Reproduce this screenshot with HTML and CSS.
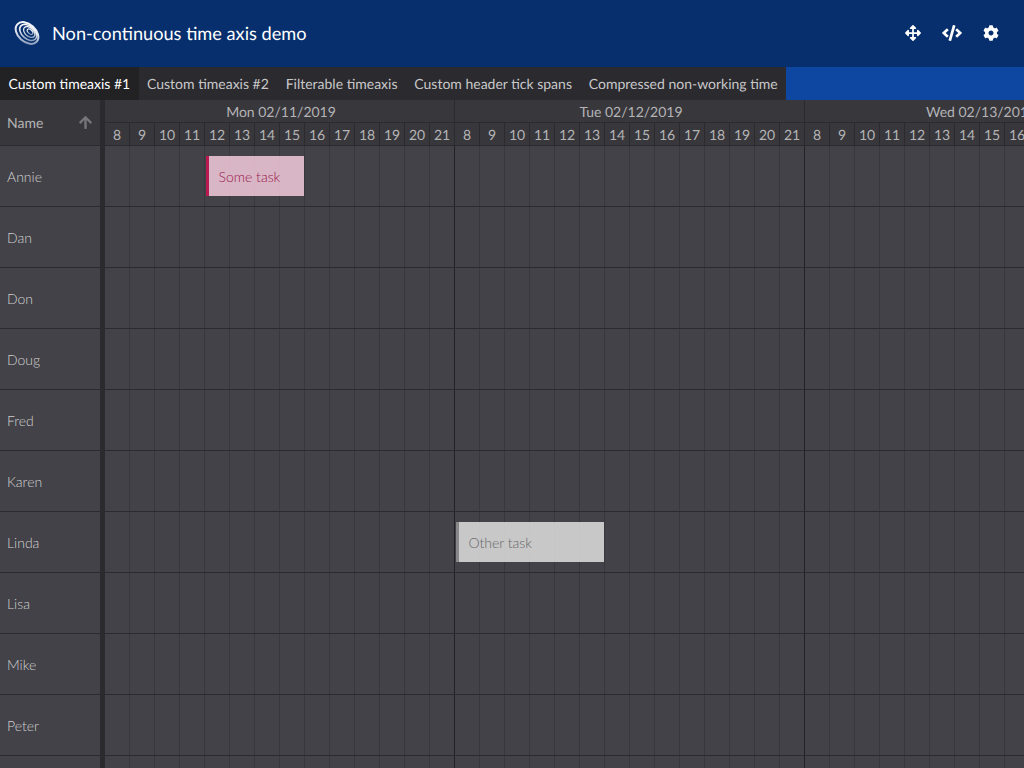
FILE: index.html
```html
<!DOCTYPE html>
<html lang="en">
<head>
<meta charset="utf-8">
<title>Non-continuous time axis demo</title>
<link rel="stylesheet" href="styles.css">
</head>
<body>
<div class="app">
  <header class="topbar">
    <svg class="logo" viewBox="0 0 28 28" width="28" height="28" aria-hidden="true">
      <defs>
        <linearGradient id="fade" x1="0" y1="0" x2="1" y2="1">
          <stop offset="0" stop-color="#fff"/>
          <stop offset=".55" stop-color="#fff" stop-opacity=".85"/>
          <stop offset="1" stop-color="#fff" stop-opacity=".4"/>
        </linearGradient>
      </defs>
      <g fill="none" stroke="url(#fade)" transform="rotate(42 14 14)">
        <ellipse cx="14" cy="14" rx="13" ry="8.800" stroke-width="2"/>
        <ellipse cx="14.500" cy="12.800" rx="9.800" ry="6.400" stroke-width="1.600"/>
        <ellipse cx="15" cy="11.800" rx="6.600" ry="4.200" stroke-width="1.300"/>
        <ellipse cx="15.400" cy="11" rx="3.400" ry="2" stroke-width="1.100"/>
      </g>
    </svg>
    <h1 class="title">Non-continuous time axis demo</h1>
    <div class="tools">
      <svg class="tool" viewBox="0 0 512 512" width="16" height="16" aria-hidden="true"><path fill="#fff" d="M352.201 425.775l-79.196 79.196c-9.373 9.373-24.568 9.373-33.941 0l-79.196-79.196c-15.119-15.119-4.411-40.971 16.971-40.97h51.162L228 284H127.196v51.162c0 21.382-25.851 32.09-40.971 16.971L7.029 272.937c-9.373-9.373-9.373-24.569 0-33.941L86.225 159.8c15.119-15.119 40.971-4.411 40.971 16.971V228H228V127.196h-51.23c-21.382 0-32.09-25.851-16.971-40.971l79.196-79.196c9.373-9.373 24.568-9.373 33.941 0l79.196 79.196c15.119 15.119 4.411 40.971-16.971 40.971h-51.162V228h100.804v-51.162c0-21.382 25.851-32.09 40.97-16.971l79.196 79.196c9.373 9.373 9.373 24.569 0 33.941L425.773 352.2c-15.119 15.119-40.971 4.411-40.97-16.971V284H284v100.804h51.23c21.382 0 32.09 25.851 16.971 40.971z"/></svg>
      <svg class="tool" viewBox="0 0 640 512" width="20" height="16" aria-hidden="true"><path fill="#fff" d="M278.9 511.500l-61-17.700c-6.400-1.800-10-8.500-8.200-14.900L346.200 8.700c1.800-6.400 8.500-10.100 14.900-8.200l61 17.700c6.400 1.800 10 8.500 8.200 14.900L293.800 503.300c-1.900 6.400-8.500 10.100-14.900 8.200zm-114-112.200l43.500-46.400c4.600-4.900 4.300-12.700-.8-17.200L117 256l90.600-79.700c5.100-4.500 5.500-12.300.8-17.200l-43.500-46.400c-4.500-4.800-12.100-5.100-17-.5L3.800 247.200c-5.100 4.700-5.100 12.800 0 17.500l144.100 135.100c4.900 4.600 12.500 4.400 17-.5zm327.200.6l144.100-135.100c5.100-4.700 5.100-12.800 0-17.500L492.100 112.100c-4.800-4.500-12.400-4.300-17 .5L431.600 159c-4.600 4.900-4.300 12.700.8 17.200L523 256l-90.600 79.700c-5.100 4.500-5.500 12.300-.8 17.200l43.500 46.400c4.500 4.900 12.100 5.100 17 .6z"/></svg>
      <svg class="tool" viewBox="0 0 512 512" width="16" height="16" aria-hidden="true"><path fill="#fff" d="M487.400 315.700l-42.600-24.600c4.300-23.200 4.300-47 0-70.200l42.600-24.600c4.900-2.800 7.100-8.600 5.500-14-11.100-35.600-30-67.800-54.700-94.600-3.800-4.100-10-5.100-14.800-2.300L380.800 110c-17.900-15.400-38.500-27.300-60.800-35.100V25.800c0-5.600-3.900-10.500-9.400-11.700-36.700-8.200-74.300-7.800-109.200 0-5.500 1.200-9.400 6.100-9.400 11.700V75c-22.200 7.900-42.800 19.800-60.800 35.100L88.700 85.500c-4.900-2.800-11-1.900-14.800 2.300-24.700 26.700-43.600 58.900-54.700 94.600-1.700 5.400.6 11.200 5.500 14L67.300 221c-4.300 23.200-4.300 47 0 70.200l-42.600 24.600c-4.900 2.800-7.100 8.600-5.500 14 11.100 35.600 30 67.800 54.700 94.600 3.800 4.100 10 5.100 14.800 2.300l42.600-24.600c17.900 15.400 38.500 27.300 60.800 35.100v49.200c0 5.600 3.900 10.500 9.400 11.700 36.700 8.200 74.300 7.800 109.200 0 5.500-1.200 9.400-6.100 9.400-11.700v-49.200c22.200-7.900 42.800-19.800 60.800-35.100l42.600 24.600c4.900 2.800 11 1.900 14.800-2.300 24.700-26.700 43.600-58.900 54.700-94.600 1.500-5.500-.7-11.300-5.600-14.100zM256 336c-44.100 0-80-35.900-80-80s35.900-80 80-80 80 35.900 80 80-35.900 80-80 80z"/></svg>
    </div>
  </header>
  <nav class="tabs">
    <span class="tab active">Custom timeaxis #1</span>
    <span class="tab">Custom timeaxis #2</span>
    <span class="tab">Filterable timeaxis</span>
    <span class="tab">Custom header tick spans</span>
    <span class="tab">Compressed non-working time</span>
  </nav>
  <div class="head">
    <div class="namehead">
      <span>Name</span>
      <svg class="sort" viewBox="0 0 448 512" width="13" height="15" aria-hidden="true"><path fill="#77777a" d="M34.900 289.500l-22.200-22.200c-9.400-9.400-9.400-24.600 0-33.900L207 39c9.400-9.400 24.600-9.400 33.900 0l194.300 194.300c9.400 9.400 9.400 24.600 0 33.900L413 289.400c-9.500 9.500-25 9.300-34.300-.4L264 168.600V456c0 13.300-10.700 24-24 24h-32c-13.300 0-24-10.700-24-24V168.600L69.200 289.100c-9.300 9.800-24.800 10-34.300.4z"/></svg>
    </div>
    <div class="split"></div>
    <div class="axis">
      <div class="days">
        <div class="day">Mon 02/11/2019</div>
        <div class="day">Tue 02/12/2019</div>
        <div class="day">Wed 02/13/2019</div>
      </div>
      <div class="hours" id="hours"></div>
    </div>
  </div>
  <div class="body">
    <div class="names">
      <div class="name">Annie</div>
      <div class="name">Dan</div>
      <div class="name">Don</div>
      <div class="name">Doug</div>
      <div class="name">Fred</div>
      <div class="name">Karen</div>
      <div class="name">Linda</div>
      <div class="name">Lisa</div>
      <div class="name">Mike</div>
      <div class="name">Peter</div>
      <div class="name"></div>
    </div>
    <div class="split"></div>
    <div class="grid">
      <div class="row"></div><div class="row"></div><div class="row"></div><div class="row"></div>
      <div class="row"></div><div class="row"></div><div class="row"></div><div class="row"></div>
      <div class="row"></div><div class="row"></div><div class="row"></div>
      <div class="event pink">Some task</div>
      <div class="event grey">Other task</div>
    </div>
  </div>
</div>
<script src="app.js"></script>
</body>
</html>
```
FILE: app.js
```js
var hours = document.getElementById('hours');
for (var d = 0; d < 3; d++) {
  for (var h = 8; h < 22; h++) {
    var cell = document.createElement('div');
    cell.className = 'hour';
    cell.textContent = h;
    hours.appendChild(cell);
  }
}
```
FILE: styles.css
```css
* { box-sizing: border-box; }
html, body { margin: 0; height: 100%; overflow: hidden; }
body { font-family: Lato, "Open Sans", sans-serif; background: #434248; color: #c8c8c8; text-rendering: geometricPrecision; }
.app { display: flex; flex-direction: column; height: 768px; overflow: hidden; }

.topbar { flex: 0 0 67px; display: flex; align-items: center; background: #072f6e; padding: 0 25px 1px 13px; color: #fff; }
.logo { flex: none; }
.title { margin: 0 0 0 11px; font-size: 18.2px; font-weight: 400; flex: 1; }
.tools { display: flex; align-items: center; }
.tool { display: block; margin-left: 21px; }
.tool:first-child { margin-left: 0; }

.tabs { flex: 0 0 33px; display: flex; background: #0d47a1; }
.tab { display: flex; align-items: center; padding: 0 8.4px; font-size: 14px; background: #2b2a2f; color: #c8c8c8; white-space: nowrap; }
.tab.active { background: #222225; color: #fff; }

.head { flex: 0 0 46px; display: flex; background: #38373c; border-bottom: 1px solid #2b2a2f; }
.namehead { flex: 0 0 100px; display: flex; align-items: center; justify-content: space-between; padding: 0 8px 0 7px; font-size: 14px; color: #b4b4b6; }
.sort { display: block; }
.split { flex: 0 0 5px; background: #2b2a2f; }
.axis { width: 1050px; flex: none; display: flex; flex-direction: column; }
.days { flex: 0 0 23px; display: flex; border-bottom: 1px solid #2b2a2f; }
.day { flex: 0 0 350px; display: flex; align-items: center; justify-content: center; padding-left: 3px; font-size: 14px; color: #b4b4b6; border-right: 1px solid #2b2a2f; }
.hours { flex: 1; display: flex; }
.hour { flex: 0 0 25px; display: flex; align-items: center; justify-content: center; font-size: 14px; color: #b4b4b6; border-right: 1px solid #2b2a2f; }

.body { flex: 1; display: flex; min-height: 0; }
.names { flex: 0 0 100px; }
.name { height: 61px; padding-left: 7px; display: flex; align-items: center; font-size: 14px; font-weight: 300; color: #d0d0d0; border-bottom: 1px solid #2b2a2f; }
.grid { position: relative; flex: none; width: 1050px;
  background-image:
    linear-gradient(to right, transparent 349px, #222225 349px),
    linear-gradient(to right, transparent 24px, #38373c 24px);
  background-size: 350px 100%, 25px 100%;
}
.row { height: 61px; border-bottom: 1px solid #2b2a2f; }
.event { position: absolute; height: 40px; display: flex; align-items: center; padding-left: 9.5px; font-size: 14px; font-weight: 300; border-left: 3px solid; opacity: .8; }
.pink { left: 101px; top: 10px; width: 98px; background: #ffd3e5; border-color: #d70f51; color: #b2104c; }
.grey { left: 351px; top: 376px; width: 148px; background: #eaeaea; border-color: #989898; color: #707070; }
```
